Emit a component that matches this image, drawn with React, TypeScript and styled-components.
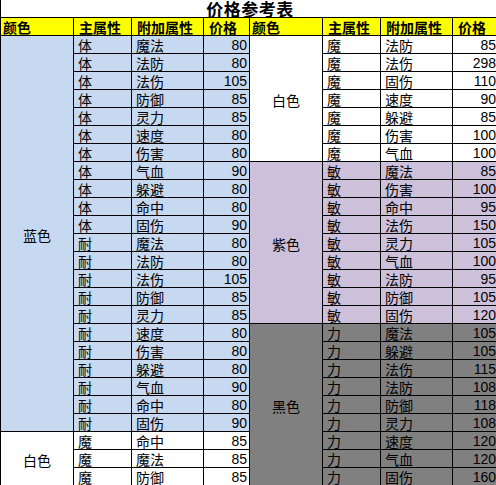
import React from 'react';
import styled, { createGlobalStyle } from 'styled-components';

const GlobalStyle = createGlobalStyle`
    html, body {
        margin: 0;
        padding: 0;
        background: #fff;
        overflow: hidden;
    }
`

type Item = [string, number];

type Group = {
    color: string;
    bg: string;
    rows: { main: string; items: Item[] }[];
};

const BLUE = '#c6d9f1';
const PURPLE = '#ccc0da';
const GREY = '#808080';
const WHITE = '#ffffff';

const leftGroups: Group[] = [
    {
        color: '蓝色',
        bg: BLUE,
        rows: [
            {
                main: '体',
                items: [['魔法', 80], ['法防', 80], ['法伤', 105], ['防御', 85], ['灵力', 85], ['速度', 80],
                    ['伤害', 80], ['气血', 90], ['躲避', 80], ['命中', 80], ['固伤', 90]],
            },
            {
                main: '耐',
                items: [['魔法', 80], ['法防', 80], ['法伤', 105], ['防御', 85], ['灵力', 85], ['速度', 80],
                    ['伤害', 80], ['躲避', 80], ['气血', 90], ['命中', 80], ['固伤', 90]],
            },
        ],
    },
    {
        color: '白色',
        bg: WHITE,
        rows: [{ main: '魔', items: [['命中', 85], ['魔法', 85], ['防御', 85]] }],
    },
];

const rightGroups: Group[] = [
    {
        color: '白色',
        bg: WHITE,
        rows: [{
            main: '魔',
            items: [['法防', 85], ['法伤', 298], ['固伤', 110], ['速度', 90], ['躲避', 85], ['伤害', 100], ['气血', 100]],
        }],
    },
    {
        color: '紫色',
        bg: PURPLE,
        rows: [{
            main: '敏',
            items: [['魔法', 85], ['伤害', 100], ['命中', 95], ['法伤', 150], ['灵力', 105], ['气血', 100],
                ['法防', 95], ['防御', 105], ['固伤', 120]],
        }],
    },
    {
        color: '黑色',
        bg: GREY,
        rows: [{
            main: '力',
            items: [['魔法', 105], ['躲避', 105], ['法伤', 115], ['法防', 108], ['防御', 118], ['灵力', 108],
                ['速度', 120], ['气血', 120], ['固伤', 160]],
        }],
    },
];

const headers = ['颜色', '主属性', '附加属性', '价格'];

function renderSide(groups: Group[], colStart: number) {
    const cells: React.ReactNode[] = [];
    let row = 3; // row 1 title, row 2 header
    groups.forEach((g, gi) => {
        const count = g.rows.reduce((n, r) => n + r.items.length, 0);
        cells.push(
            <ColorCell key={`c${colStart}-${gi}`} $bg={g.bg} $col={colStart} $row={row} $span={count}>
                <Label>{g.color}</Label>
            </ColorCell>
        );
        g.rows.forEach((r, ri) => {
            r.items.forEach(([extra, price], ii) => {
                const k = `${colStart}-${gi}-${ri}-${ii}`;
                cells.push(<Cell key={`m${k}`} $bg={g.bg} $col={colStart + 1} $row={row}><Label>{r.main}</Label></Cell>);
                cells.push(<Cell key={`e${k}`} $bg={g.bg} $col={colStart + 2} $row={row}><Label>{extra}</Label></Cell>);
                cells.push(<PriceCell key={`p${k}`} $bg={g.bg} $col={colStart + 3} $row={row}><Label>{price}</Label></PriceCell>);
                row++;
            });
        });
    });
    return cells;
}

function App() {
    return (
        <>
            <GlobalStyle/>
            <Sheet>
                <Title><TitleText>价格参考表</TitleText></Title>
                {[...headers, ...headers].map((h, i) => (
                    <HeaderCell key={i} $col={i + 1}><Label>{h}</Label></HeaderCell>
                ))}
                {renderSide(leftGroups, 1)}
                {renderSide(rightGroups, 5)}
            </Sheet>
        </>
    );
}

const Sheet = styled.div`
    display: grid;
    grid-template-columns: 73px 58px 72px 46px 73px 58px 72px 46px;
    grid-template-rows: 18px;
    grid-auto-rows: 18px;
    width: 498px;
    font-family: "Noto Sans CJK SC", "Liberation Sans", sans-serif;
    font-size: 14px;
    color: #000;
    border-left: 1px solid #000;
`

const Title = styled.div`
    grid-column: 1 / -1;
    grid-row: 1;
    display: flex;
    align-items: flex-end;
    justify-content: center;
    border-bottom: 1px solid #000;
    box-sizing: border-box;
`

const TitleText = styled.span`
    display: block;
    font-size: 17px;
    font-weight: 700;
    line-height: 16px;
    letter-spacing: 0.5px;
`

const Label = styled.span`
    display: block;
    line-height: 14px;
    margin-bottom: 1px;
`

type Pos = { $col: number; $row?: number; $bg?: string; $span?: number };

const BaseCell = styled.div<Pos>`
    grid-column: ${p => p.$col};
    grid-row: ${p => (p.$row ?? 2)} ${p => (p.$span ? `/ span ${p.$span}` : '')};
    box-sizing: border-box;
    border-right: 1px solid #000;
    border-bottom: 1px solid #000;
    background: ${p => p.$bg ?? '#fff'};
    display: flex;
    white-space: nowrap;
    overflow: hidden;
`

const HeaderCell = styled(BaseCell)`
    background: #ffff00;
    font-weight: 700;
    align-items: flex-end;
    padding-left: ${p => (p.$col === 1 || p.$col === 5 ? '2px' : '5px')};
`

const Cell = styled(BaseCell)`
    align-items: flex-end;
    padding-left: 4px;
`

const PriceCell = styled(BaseCell)`
    align-items: flex-end;
    justify-content: flex-end;
    padding-right: 2px;
    font-family: "Liberation Sans", Arial, sans-serif;
    font-size: 14px;
`

const ColorCell = styled(BaseCell)`
    align-items: center;
    justify-content: center;
    padding-top: 4px;
`

export default App;
